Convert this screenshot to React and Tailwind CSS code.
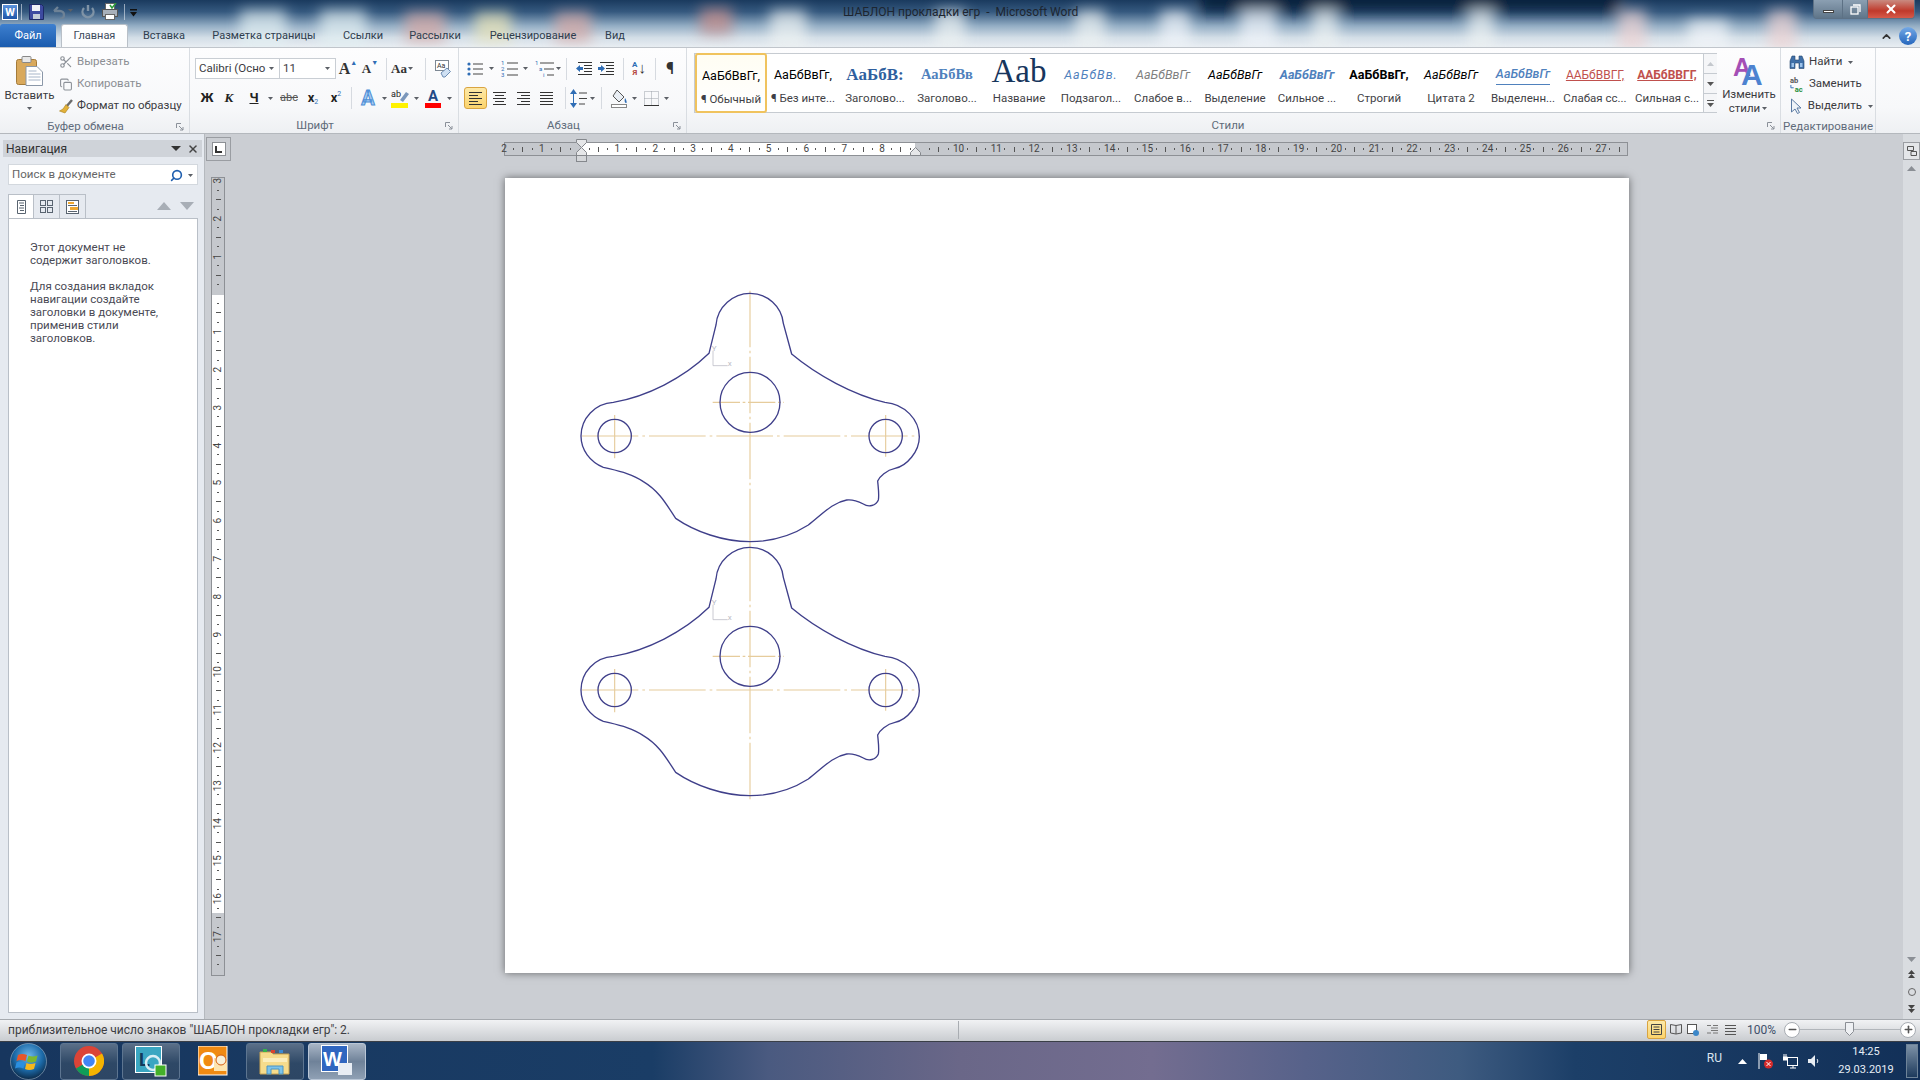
import { Scissors, Copy, X, Search, ChevronUp, Plus, Minus } from 'lucide-react';

const tabs = [
  ['Вставка', 'w-[72px]'],
  ['Разметка страницы', 'w-[128px]'],
  ['Ссылки', 'w-[70px]'],
  ['Рассылки', 'w-[74px]'],
  ['Рецензирование', 'w-[122px]'],
  ['Вид', 'w-[42px]'],
];

const galleryStyles = [
  { sample: 'АаБбВвГг,', label: '¶ Обычный', cls: 'text-[12.5px] text-black', active: true },
  { sample: 'АаБбВвГг,', label: '¶ Без инте...', cls: 'text-[12.5px] text-black' },
  { sample: 'АаБбВ:', label: 'Заголово...', cls: "text-[17px] font-bold text-[#2f5f9e] font-['Liberation_Serif']" },
  { sample: 'АаБбВв', label: 'Заголово...', cls: "text-[14.5px] font-bold text-[#4f81bd] font-['Liberation_Serif']" },
  { sample: 'Aab', label: 'Название', cls: "text-[33px] leading-[36px] -mt-[8px] text-[#17365d] font-['Liberation_Serif']" },
  { sample: 'АаБбВв.', label: 'Подзагол...', cls: 'text-[12.5px] italic tracking-[1px] text-[#4f81bd]' },
  { sample: 'АаБбВвГг', label: 'Слабое в...', cls: 'text-[12.5px] italic text-[#808080]' },
  { sample: 'АаБбВвГг', label: 'Выделение', cls: 'text-[12.5px] italic text-black' },
  { sample: 'АаБбВвГг', label: 'Сильное ...', cls: 'text-[12.5px] italic font-bold text-[#4f81bd]' },
  { sample: 'АаБбВвГг,', label: 'Строгий', cls: 'text-[12.5px] font-bold text-black' },
  { sample: 'АаБбВвГг', label: 'Цитата 2', cls: 'text-[12.5px] italic text-black' },
  { sample: 'АаБбВвГг', label: 'Выделенн...', cls: 'text-[12.5px] italic font-medium text-[#4f81bd] border-b border-[#4f81bd]' },
  { sample: 'ААБбВВГГ,', label: 'Слабая сс...', cls: 'text-[12px] text-[#c0504d] underline' },
  { sample: 'ААБбВВГГ,', label: 'Сильная с...', cls: 'text-[12px] font-bold text-[#c0504d] underline' },
];

const hNums = [2, 1, ''];
for (let i = 1; i <= 27; i++) hNums.push(i === 9 ? '' : i);
const vNums = [3, 2, 1, ''];
for (let i = 1; i <= 17; i++) vNums.push(i);

function Arrow({ w = 'w-[9px]' }) {
  return (
    <div className={`${w} flex items-center justify-center shrink-0`}>
      <svg width="5" height="3" viewBox="0 0 5 3"><path d="M0 0h5L2.5 3z" fill="#5b5f66" /></svg>
    </div>
  );
}

function Sep({ cls = '' }) {
  return <div className={`w-px h-[22px] bg-[#d6dae0] shrink-0 ${cls}`} />;
}

function Launcher() {
  return (
    <div className="w-[18px] flex items-center justify-center shrink-0">
      <svg width="8" height="8" viewBox="0 0 8 8" fill="none" stroke="#8a9099">
        <path d="M.5 5V.5H5M3 3l4 4M7 4v3H4" />
      </svg>
    </div>
  );
}

function GroupLabel({ text, launcher = true }) {
  return (
    <div className="h-[17px] pt-[2px] flex items-center shrink-0 mt-auto">
      <div className="flex-1 text-center text-[11.5px] leading-none text-[#5f6b7a]">{text}</div>
      {launcher && <Launcher />}
    </div>
  );
}

function Ic({ w, children, cls = '' }) {
  return <div className={`${w} h-[22px] flex items-center justify-center shrink-0 ${cls}`}>{children}</div>;
}

function LinesIcon({ kind }) {
  const rows = {
    left: ['M1 2.5h13', 'M1 5.5h9', 'M1 8.5h13', 'M1 11.5h9', 'M1 14.5h13'],
    center: ['M1 2.5h13', 'M3 5.5h9', 'M1 8.5h13', 'M3 11.5h9', 'M1 14.5h13'],
    right: ['M1 2.5h13', 'M5 5.5h9', 'M1 8.5h13', 'M5 11.5h9', 'M1 14.5h13'],
    justify: ['M1 2.5h13', 'M1 5.5h13', 'M1 8.5h13', 'M1 11.5h13', 'M1 14.5h13'],
  }[kind];
  return (
    <svg width="15" height="16" viewBox="0 0 15 16" stroke="#333" fill="none">
      {rows.map((d) => <path key={d} d={d} />)}
    </svg>
  );
}

function BulletsIcon() {
  return (
    <svg width="16" height="16" viewBox="0 0 16 16" fill="none">
      <circle cx="2" cy="3" r="1.6" fill="#2f6db5" /><circle cx="2" cy="8" r="1.6" fill="#2f6db5" /><circle cx="2" cy="13" r="1.6" fill="#2f6db5" />
      <path d="M6 3h10M6 8h10M6 13h10" stroke="#444" />
    </svg>
  );
}

function NumberingIcon() {
  return (
    <svg width="17" height="17" viewBox="0 0 17 17" fill="none">
      <text x="0" y="5" fontSize="6" fill="#2f6db5" fontFamily="Roboto">1</text>
      <text x="0" y="11" fontSize="6" fill="#2f6db5" fontFamily="Roboto">2</text>
      <text x="0" y="17" fontSize="6" fill="#2f6db5" fontFamily="Roboto">3</text>
      <path d="M6 3h11M6 9h11M6 15h11" stroke="#444" />
    </svg>
  );
}

function MultiIcon() {
  return (
    <svg width="19" height="17" viewBox="0 0 19 17" fill="none">
      <text x="0" y="5" fontSize="6" fill="#2f6db5" fontFamily="Roboto">1</text>
      <text x="4" y="11" fontSize="6" fill="#2f6db5" fontFamily="Roboto">a</text>
      <text x="8" y="17" fontSize="6" fill="#2f6db5" fontFamily="Roboto">i</text>
      <path d="M5 3h14M9 9h10M12 15h7" stroke="#444" />
    </svg>
  );
}

function IndentIcon({ dir }) {
  return (
    <svg width="16" height="15" viewBox="0 0 16 15" fill="none">
      <path d="M2 1.5h14M8 4.5h8M8 7.5h8M8 10.5h8M2 13.5h14" stroke="#333" />
      {dir === 'out'
        ? <path d="M0 7.5l4-3.5v2h3v3H4v2z" fill="#2f6db5" />
        : <path d="M7 7.5L3 4v2H0v3h3v2z" fill="#2f6db5" />}
    </svg>
  );
}

function PasteIcon() {
  return (
    <svg width="27" height="30" viewBox="0 0 27 30">
      <rect x="0.5" y="3.5" width="20" height="25" rx="2" fill="#d9a95c" stroke="#a47b3a" />
      <rect x="6" y="0.5" width="9" height="6" rx="1" fill="#e8e8e8" stroke="#888" />
      <path d="M10 10.5h11l5.5 5.5v13.5H10z" fill="#fff" stroke="#8a97a8" />
      <path d="M12.5 15h8M12.5 18h12M12.5 21h12M12.5 24h12" stroke="#a7b6c9" />
    </svg>
  );
}

function PainterIcon() {
  return (
    <svg width="14" height="15" viewBox="0 0 14 15">
      <path d="M13 1L7 8" stroke="#6b6b6b" strokeWidth="2.4" />
      <path d="M7 5.5l3 3-4 5.5-5.5-2 3.5-2z" fill="#e3b23a" stroke="#a87d1a" strokeWidth=".6" />
    </svg>
  );
}

function ClearFormatIcon() {
  return (
    <svg width="17" height="18" viewBox="0 0 17 18" fill="none">
      <rect x="1.5" y=".5" width="13" height="10" fill="#fff" stroke="#7d8894" />
      <text x="3" y="8" fontSize="7" fill="#333" fontFamily="Roboto">Aa</text>
      <path d="M7 13l6-5 3.5 3.5-5.5 5.5H9z" fill="#cfe0f3" stroke="#6d8db3" />
    </svg>
  );
}

function Highlighter() {
  return (
    <svg width="18" height="19" viewBox="0 0 18 19">
      <text x="0" y="8" fontSize="9" fill="#222" fontFamily="Roboto">ab</text>
      <path d="M9 11l6-8 3 2-6 8z" fill="#7b97bb" />
      <rect x="0" y="14" width="17" height="5" fill="#fff200" />
    </svg>
  );
}

function Shading() {
  return (
    <svg width="17" height="19" viewBox="0 0 17 19" fill="none">
      <path d="M6 1l7 7-5 5-6-6z" fill="#e9eef4" stroke="#555" />
      <path d="M14 9c2 3 2 5 1 5s-2-2-1-5z" fill="#2f6db5" />
      <rect x=".5" y="15.5" width="15" height="3" fill="#fff" stroke="#888" />
    </svg>
  );
}

function Borders() {
  return (
    <svg width="15" height="15" viewBox="0 0 15 15" fill="none">
      <path d="M.5.5h14v14H.5zM7.5.5v14M.5 7.5h14" stroke="#9aa0a8" strokeDasharray="1 1" />
      <path d="M0 14.5h15" stroke="#333" />
    </svg>
  );
}

function LineSpacing() {
  return (
    <svg width="17" height="19" viewBox="0 0 17 19" fill="none">
      <path d="M3.5 0L7 5H0zM3.5 19L0 14h7z" fill="#2f6db5" />
      <path d="M3.5 4v11" stroke="#2f6db5" />
      <path d="M9 4h8M9 9.5h8M9 15h6" stroke="#444" />
    </svg>
  );
}

function ChangeStylesIcon() {
  return (
    <svg width="32" height="33" viewBox="0 0 32 33">
      <text x="0" y="23" fontSize="25" fontWeight="700" fill="#a44fb5" fontFamily="Liberation Sans">A</text>
      <text x="8" y="32" fontSize="30" fontWeight="700" fill="#4d82d0" fontFamily="Liberation Sans">A</text>
    </svg>
  );
}

function Binoculars() {
  return (
    <svg width="16" height="15" viewBox="0 0 16 15">
      <path d="M1 6l2-5h3v4h4V1h3l2 5v7.5H10V8H6v5.5H1z" fill="#3f6fa8" stroke="#25476f" strokeWidth=".6" />
      <rect x="2.5" y="8" width="2.5" height="4" fill="#9cc2ea" /><rect x="11" y="8" width="2.5" height="4" fill="#9cc2ea" />
    </svg>
  );
}

function ReplaceIcon() {
  return (
    <svg width="17" height="17" viewBox="0 0 17 17">
      <text x="1" y="7" fontSize="8" fontWeight="700" fill="#555" fontFamily="Roboto">ab</text>
      <path d="M2 9v3h3" stroke="#2f6db5" fill="none" />
      <text x="6" y="16" fontSize="8" fontWeight="700" fill="#1f8f3a" fontFamily="Roboto">ac</text>
    </svg>
  );
}

function CursorIcon() {
  return (
    <svg width="13" height="16" viewBox="0 0 13 16">
      <path d="M1.5 1l9.5 9H7l2.5 4.5-2 1L5 11l-3.5 3z" fill="#eef3f8" stroke="#5a7aa3" />
    </svg>
  );
}

function HRuler() {
  return (
    <div className="relative w-[1124px] h-[14px] mt-[8px] border border-[#8d9095] bg-[linear-gradient(90deg,#c5c8cd_76px,#ffffff_76px,#ffffff_410px,#c5c8cd_410px)] flex items-center">
      <div className="flex -ml-[5.7px]">
        {hNums.map((n, i) => (
          <div key={i} className="w-[37.8px] shrink-0 flex items-center h-[12px]">
            <div className="w-[9.45px] text-center text-[10px] leading-none text-[#444] shrink-0">{n}</div>
            <div className="w-[9.45px] flex justify-center shrink-0"><div className="w-px h-[2px] bg-[#555]" /></div>
            <div className="w-[9.45px] flex justify-center shrink-0"><div className="w-px h-[5px] bg-[#555]" /></div>
            {i < 29 && <div className="w-[9.45px] flex justify-center shrink-0"><div className="w-px h-[2px] bg-[#555]" /></div>}
          </div>
        ))}
      </div>
      <svg className="absolute left-[70px] -top-[4px]" width="13" height="23" viewBox="0 0 13 23">
        <path d="M1.500.5h10v3l-5 5-5-5z" fill="#e6e7e9" stroke="#85888d" />
        <path d="M6.500 8.500l5 5v3h-10v-3z" fill="#e6e7e9" stroke="#85888d" />
        <rect x="1.500" y="16.500" width="10" height="6" fill="#d5d7da" stroke="#85888d" />
      </svg>
      <svg className="absolute left-[404px] top-[4px]" width="13" height="10" viewBox="0 0 13 10">
        <path d="M6.500.5l5 5v3h-10v-3z" fill="#e6e7e9" stroke="#85888d" />
      </svg>
    </div>
  );
}

function VRuler() {
  return (
    <div className="w-[14px] h-[799px] mt-[16px] ml-[6px] border border-[#8d9095] bg-[linear-gradient(180deg,#c5c8cd_117px,#ffffff_117px,#ffffff_735px,#c5c8cd_735px)] overflow-hidden flex flex-col">
      {vNums.map((n, i) => (
        <div key={i} className={`h-[37.8px] shrink-0 flex flex-col items-center w-[12px] ${i === 0 ? '-mt-[2px]' : ''}`}>
          <div className="h-[9.45px] flex items-center justify-center text-[10px] leading-none text-[#444] -rotate-90 shrink-0">{n}</div>
          <div className="h-[9.45px] flex items-center shrink-0"><div className="h-px w-[2px] bg-[#555]" /></div>
          <div className="h-[9.45px] flex items-center shrink-0"><div className="h-px w-[5px] bg-[#555]" /></div>
          <div className="h-[9.45px] flex items-center shrink-0"><div className="h-px w-[2px] bg-[#555]" /></div>
        </div>
      ))}
    </div>
  );
}

function Gasket({ cls = '' }) {
  const outline = 'M447 220 L468 135 C472 80 520 40 570 40 C622 40 665 80 670 130 L695 222 C770 285 880 345 975 367 C1035 372 1078 420 1078 470 C1078 515 1040 558 1005 565 C980 570 958 590 953 603 C955 625 958 645 955 660 C948 678 925 682 910 672 C890 662 875 658 860 660 C815 668 785 705 745 735 C690 770 630 785 570 785 C490 785 405 755 347 715 C320 675 300 635 250 605 C215 580 170 572 130 562 C90 545 63 510 63 468 C63 415 105 370 160 367 C260 350 370 295 447 220 Z';
  return (
    <svg className={`block overflow-visible ${cls}`} width="380" height="270" viewBox="0 0 1140 810" fill="none">
      <g stroke="#e6cc9c" strokeWidth="3.4">
        <path d="M570 32V800" strokeDasharray="170 10 8 10" />
        <path d="M65 468H1078" strokeDasharray="170 12 8 12" />
        <path d="M458 367H672" strokeDasharray="82 8 8 8" />
        <path d="M164 405V535M977 405V530" />
      </g>
      <path d="M459 212V257H503" stroke="#bcbcc6" strokeWidth="2.400" />
      <text x="455" y="212" fontSize="24" fill="#bcbcc6" fontFamily="Roboto">Y</text>
      <text x="503" y="257" fontSize="24" fill="#bcbcc6" fontFamily="Roboto">x</text>
      <g stroke="#3f3f8a" strokeWidth="4">
        <path d={outline} />
        <circle cx="570" cy="367" r="90" />
        <circle cx="164" cy="468" r="50" />
        <circle cx="977" cy="468" r="50" />
      </g>
    </svg>
  );
}

function TaskButton({ children, plain = false, active = false }) {
  const skin = plain
    ? ''
    : active
      ? 'border border-[#b9c6d6] bg-[linear-gradient(180deg,#a9b6c6,#6f8299_50%,#8fa0b4)]'
      : 'border border-[#5d7590] bg-[linear-gradient(180deg,#5a6f88,#2e4866_55%,#2d4664)]';
  return <div className={`w-[58px] h-[37px] rounded-[3px] flex items-center justify-center ${skin}`}>{children}</div>;
}

export default function App() {
  return (
    <div className="w-[1920px] h-[1080px] flex flex-col overflow-hidden font-[Roboto,sans-serif] text-[#3b3b3f] select-none">
      {/* заголовок окна и вкладки */}
      <div className="relative h-[47px] shrink-0 bg-[linear-gradient(180deg,#1a3a5e_0%,#35597f_25%,#93adc4_55%,#d3dee7_80%,#e8edf2_100%)] overflow-hidden">
        <svg className="absolute inset-0" width="1920" height="47">
          <defs><filter id="bl"><feGaussianBlur stdDeviation="7" /></filter></defs>
          <g filter="url(#bl)" opacity="0.7">
            <rect x="1200" y="-12" width="420" height="24" fill="#04152e" />
            <rect x="240" y="10" width="46" height="40" fill="#e3f0f3" />
            <rect x="320" y="10" width="46" height="40" fill="#e3f0f3" />
            <rect x="405" y="12" width="40" height="30" fill="#d8a9a4" />
            <rect x="475" y="12" width="36" height="30" fill="#ece6b8" />
            <rect x="555" y="12" width="36" height="30" fill="#d8a9a4" />
            <rect x="700" y="8" width="32" height="26" fill="#cc8f8a" />
            <rect x="770" y="10" width="36" height="40" fill="#eef3f3" />
            <rect x="935" y="10" width="30" height="40" fill="#eef3f3" />
            <rect x="1075" y="10" width="30" height="40" fill="#eef3f3" />
            <rect x="1160" y="10" width="30" height="40" fill="#f1f5fa" />
            <rect x="1240" y="10" width="36" height="40" fill="#f1f5fa" />
            <rect x="1312" y="10" width="26" height="40" fill="#eef3f3" />
            <rect x="1468" y="10" width="26" height="40" fill="#eef3f3" />
            <rect x="1618" y="10" width="28" height="40" fill="#efd3d3" />
            <rect x="1688" y="20" width="40" height="30" fill="#f4f7fa" />
            <rect x="1768" y="10" width="28" height="40" fill="#efd3d3" />
          </g>
        </svg>

        <div className="relative h-[24px] flex items-start">
          <div className="w-[16px] h-[16px] mt-[4px] ml-[2px] bg-[linear-gradient(180deg,#5b93dc,#1f56a8)] border border-white flex items-center justify-center text-[11px] font-bold leading-none text-white shrink-0">W</div>
          <div className="w-px h-[16px] mt-[4px] ml-[3px] bg-[#dfe6ee]/60" />
          <svg className="mt-[4px] ml-[7px]" width="15" height="16" viewBox="0 0 15 16">
            <path d="M.5.5h12l2 2v13H.5z" fill="#3d4aa0" stroke="#1d2a66" />
            <rect x="3" y="1" width="8" height="6" fill="#eef1f6" /><rect x="4" y="10" width="7" height="5" fill="#c4ccd8" />
          </svg>
          <svg className="mt-[5px] ml-[7px]" width="14" height="14" viewBox="0 0 14 14" fill="none">
            <path d="M3 6l4-4M3 6h6a4 4 0 0 1 0 8" stroke="#6e8296" strokeWidth="2.4" />
          </svg>
          <Arrow w="w-[6px] h-[24px] -mt-[2px] ml-[2px]" />
          <svg className="mt-[5px] ml-[8px]" width="14" height="14" viewBox="0 0 14 14" fill="none">
            <path d="M3 3a5.500 5.500 0 1 0 8 0M7 0v6" stroke="#7f93a6" strokeWidth="2.4" />
          </svg>
          <svg className="mt-[3px] ml-[7px]" width="16" height="17" viewBox="0 0 16 17">
            <rect x="3.500" y=".5" width="9" height="6" fill="#fff" stroke="#666" />
            <rect x=".5" y="6.500" width="15" height="7" fill="#a8b0ba" stroke="#555" />
            <rect x="3.500" y="11.500" width="9" height="5" fill="#fff" stroke="#666" />
            <path d="M8 2l2 3 4-5" stroke="#2e9d3a" strokeWidth="1.600" fill="none" />
          </svg>
          <div className="w-px h-[16px] mt-[4px] ml-[6px] bg-[#dfe6ee]/60" />
          <svg className="mt-[9px] ml-[5px]" width="7" height="8" viewBox="0 0 7 8"><path d="M0 0h7v1.500H0zM0 3h7L3.500 7.500z" fill="#111" /></svg>
          <div className="ml-[706px] mt-[4px] text-[12px] leading-[16px] text-[#1d2530] whitespace-pre">ШАБЛОН прокладки егр  -  Microsoft Word</div>
          <div className="ml-auto mr-[5px] flex h-[19px] w-[102px] rounded-b-[4px] border border-t-0 border-[#5d7185] overflow-hidden">
            <div className="w-[28px] bg-[linear-gradient(180deg,#8b9fb2,#5f7589)] flex items-center justify-center"><div className="w-[11px] h-[3px] mt-[4px] bg-white border border-[#444]" /></div>
            <div className="w-[26px] border-x border-[#5d7185] bg-[linear-gradient(180deg,#8b9fb2,#5f7589)] flex items-center justify-center">
              <svg width="11" height="11" viewBox="0 0 11 11" fill="none" stroke="#fff" strokeWidth="1.300"><rect x="1" y="3" width="7" height="7" /><path d="M3 1h7v7" /></svg>
            </div>
            <div className="flex-1 bg-[linear-gradient(180deg,#c98a80,#c0392b_60%,#d65a4a)] flex items-center justify-center">
              <X size={14} strokeWidth={3.5} color="#ffffff" />
            </div>
          </div>
        </div>

        <div className="relative h-[23px] flex items-end">
          <div className="w-[56px] h-[23px] pt-[1px] rounded-t-[3px] bg-[linear-gradient(180deg,#3d7fcf,#1b5cae)] text-white text-[11px] flex items-center justify-center">Файл</div>
          <div className="w-[67px] h-[23px] pt-[1px] ml-[5px] rounded-t-[3px] border border-b-0 border-[#b9c0c8] bg-[linear-gradient(180deg,#ffffff,#fbfcfd)] text-[11px] text-[#3b4a5c] flex items-center justify-center">Главная</div>
          {tabs.map(([t, w]) => (
            <div key={t} className={`${w} h-[23px] pt-[1px] shrink-0 flex items-center justify-center text-[11px] text-[#2f3d4e]`}>{t}</div>
          ))}
          <div className="ml-auto mr-[3px] mb-[2px] flex items-center gap-[6px]">
            <ChevronUp size={13} strokeWidth={3} color="#333333" />
            <div className="w-[18px] h-[18px] rounded-full bg-[linear-gradient(180deg,#74a9e6,#2566bd)] text-white text-[13px] font-bold leading-none flex items-center justify-center">?</div>
          </div>
        </div>
      </div>

      {/* лента */}
      <div className="h-[87px] shrink-0 flex border-t border-b border-[#b4b8bd] border-t-[#c0c5cb] bg-[linear-gradient(180deg,#fdfdfe,#f7f8fa_70%,#eef0f3)] text-[11.5px]">
        {/* Буфер обмена */}
        <div className="w-[190px] shrink-0 flex flex-col border-r border-[#d9dde2]">
          <div className="flex pt-[3px]">
            <div className="w-[59px] flex flex-col items-center shrink-0">
              <div className="h-[35px] flex items-end"><PasteIcon /></div>
              <div className="text-[11.5px] leading-none mt-[4px]">Вставить</div>
              <Arrow w="w-[9px] h-[12px] mt-[1px]" />
            </div>
            <div className="flex flex-col">
              <div className="h-[22px] flex items-center text-[#8c8f94]"><Scissors size={14} color="#8c9198" className="w-[14px] shrink-0" /><span className="ml-[4px]">Вырезать</span></div>
              <div className="h-[22px] flex items-center text-[#8c8f94]"><Copy size={13} color="#8c9198" className="w-[14px] shrink-0" /><span className="ml-[4px]">Копировать</span></div>
              <div className="h-[22px] flex items-center"><PainterIcon /><span className="ml-[4px]">Формат по образцу</span></div>
            </div>
          </div>
          <GroupLabel text="Буфер обмена" />
        </div>

        {/* Шрифт */}
        <div className="w-[269px] shrink-0 flex flex-col border-r border-[#d9dde2] pt-[10px]">
          <div className="flex items-center pl-[5px] h-[21px]">
            <div className="w-[85px] h-[21px] border border-[#c9ced4] bg-white flex items-center pl-[3px] text-[11.5px] shrink-0">Calibri (Осно<Arrow w="w-[9px] ml-auto mr-[3px]" /></div>
            <div className="w-[56px] h-[21px] border border-l-0 border-[#c9ced4] bg-white flex items-center pl-[3px] text-[11.5px] shrink-0">11<Arrow w="w-[9px] ml-auto mr-[3px]" /></div>
            <Ic w="w-[22px] ml-[1px]"><span className="text-[16px] font-['Liberation_Serif'] font-bold text-[#333]">A</span><span className="text-[7px] text-[#2f6db5] -mt-[10px]">▲</span></Ic>
            <Ic w="w-[22px]"><span className="text-[13px] font-['Liberation_Serif'] font-bold text-[#333]">A</span><span className="text-[7px] text-[#2f6db5] -mt-[10px]">▼</span></Ic>
            <Sep cls="ml-[5px]" />
            <Ic w="w-[32px]"><span className="text-[13px] font-['Liberation_Serif'] font-bold text-[#333]">Aa</span><Arrow w="w-[8px]" /></Ic>
            <Sep cls="ml-[6px]" />
            <Ic w="w-[30px] ml-[1px]"><ClearFormatIcon /></Ic>
          </div>
          <div className="flex items-center pl-[5px] h-[22px] mt-[8px]">
            <Ic w="w-[24px]"><span className="text-[13px] font-bold text-[#222]">Ж</span></Ic>
            <Ic w="w-[20px]"><span className="text-[13px] font-bold italic text-[#222] font-['Liberation_Serif']">К</span></Ic>
            <Ic w="w-[24px] ml-[3px]"><span className="text-[13px] font-bold underline text-[#222]">Ч</span></Ic>
            <Arrow />
            <Ic w="w-[24px] ml-[2px]"><span className="text-[11px] line-through text-[#555]">abc</span></Ic>
            <Ic w="w-[24px]"><span className="text-[13px] font-bold text-[#222]">x</span><span className="text-[7px] text-[#2f6db5] mt-[8px]">2</span></Ic>
            <Ic w="w-[22px]"><span className="text-[13px] font-bold text-[#222]">x</span><span className="text-[7px] text-[#2f6db5] -mt-[8px]">2</span></Ic>
            <Sep cls="ml-[4px]" />
            <Ic w="w-[24px] ml-[4px]"><span className="text-[20px] font-bold leading-none text-[#a9cdf2] [-webkit-text-stroke:1px_#4f8fd6]">A</span></Ic>
            <Arrow w="w-[8px]" />
            <Ic w="w-[24px]"><Highlighter /></Ic>
            <Arrow />
            <Ic w="w-[24px]">
              <div className="flex flex-col items-center">
                <span className="text-[15px] font-bold leading-[14px] text-[#234a86]">A</span>
                <div className="w-[16px] h-[5px] bg-[#ff0000]" />
              </div>
            </Ic>
            <Arrow />
          </div>
          <GroupLabel text="Шрифт" />
        </div>

        {/* Абзац */}
        <div className="w-[228px] shrink-0 flex flex-col border-r border-[#d9dde2] pt-[10px]">
          <div className="flex items-center pl-[4px] h-[21px]">
            <Ic w="w-[24px]"><BulletsIcon /></Ic>
            <Arrow w="w-[8px]" />
            <Ic w="w-[24px] ml-[2px]"><NumberingIcon /></Ic>
            <Arrow w="w-[8px]" />
            <Ic w="w-[20px] ml-[5px]"><MultiIcon /></Ic>
            <Arrow w="w-[8px]" />
            <Sep cls="ml-[4px]" />
            <Ic w="w-[22px] ml-[6px]"><IndentIcon dir="out" /></Ic>
            <Ic w="w-[22px]"><IndentIcon dir="in" /></Ic>
            <Sep cls="ml-[6px]" />
            <Ic w="w-[22px] ml-[4px]">
              <div className="flex flex-col items-center text-[8px] font-bold leading-[8px]"><span className="text-[#2f6db5]">А</span><span className="text-[#b5473f]">Я</span></div>
              <span className="text-[15px] leading-none text-[#333] ml-[1px]">↓</span>
            </Ic>
            <Sep cls="ml-[5px]" />
            <Ic w="w-[24px] ml-[2px]"><span className="text-[16px] font-bold text-[#333]">¶</span></Ic>
          </div>
          <div className="flex items-center pl-[5px] h-[22px] mt-[8px]">
            <Ic w="w-[23px]" cls="rounded-[3px] border border-[#d9a441] bg-[linear-gradient(180deg,#fde9a8,#fbd36c)]"><LinesIcon kind="left" /></Ic>
            <Ic w="w-[24px]"><LinesIcon kind="center" /></Ic>
            <Ic w="w-[24px]"><LinesIcon kind="right" /></Ic>
            <Ic w="w-[23px]"><LinesIcon kind="justify" /></Ic>
            <Sep cls="ml-[7px]" />
            <Ic w="w-[20px] ml-[2px]"><LineSpacing /></Ic>
            <Arrow w="w-[8px]" />
            <Sep cls="ml-[5px]" />
            <Ic w="w-[22px] ml-[6px]"><Shading /></Ic>
            <Arrow w="w-[8px]" />
            <Ic w="w-[22px] ml-[2px]"><Borders /></Ic>
            <Arrow w="w-[8px]" />
          </div>
          <GroupLabel text="Абзац" />
        </div>

        {/* Стили */}
        <div className="w-[1094px] shrink-0 flex flex-col border-r border-[#d9dde2] pl-[7px]">
          <div className="flex pt-[5px]">
            <div className="w-[1023px] h-[60px] shrink-0 flex border border-[#c6cbd1] bg-white">
              {galleryStyles.map((s, i) => (
                <div key={i} className={`w-[72px] shrink-0 flex flex-col items-center overflow-hidden ${s.active ? 'rounded-[3px] border-2 border-[#f0c35e] bg-[linear-gradient(180deg,#fffdf3,#fff)] -my-px' : ''}`}>
                  <div className="h-[37px] pt-[5px] w-[62px] flex items-center justify-center overflow-hidden whitespace-nowrap">
                    <span className={s.cls}>{s.sample}</span>
                  </div>
                  <div className="text-[11.5px] leading-[14px] whitespace-nowrap text-[#3f3f46]">{s.label}</div>
                </div>
              ))}
              <div className="ml-auto w-[14px] flex flex-col border-l border-[#c6cbd1] shrink-0 bg-[#f5f6f8]">
                <div className="h-[20px] flex items-center justify-center border-b border-[#c6cbd1]"><svg width="7" height="4" viewBox="0 0 7 4"><path d="M3.500 0L7 4H0z" fill="#c4c8cd" /></svg></div>
                <div className="h-[20px] flex items-center justify-center border-b border-[#c6cbd1]"><svg width="7" height="4" viewBox="0 0 7 4"><path d="M0 0h7L3.500 4z" fill="#555" /></svg></div>
                <div className="flex-1 flex items-center justify-center"><svg width="7" height="7" viewBox="0 0 7 7"><path d="M0 0h7v1H0zM0 3h7L3.500 7z" fill="#555" /></svg></div>
              </div>
            </div>
            <div className="w-[63px] flex flex-col items-center shrink-0 pl-[1px]">
              <div className="h-[34px] flex items-start"><ChangeStylesIcon /></div>
              <div className="text-[11.5px] leading-[14px]">Изменить</div>
              <div className="text-[11.5px] leading-[14px] flex items-center">стили<Arrow w="w-[9px]" /></div>
            </div>
          </div>
          <GroupLabel text="Стили" />
        </div>

        {/* Редактирование */}
        <div className="w-[95px] shrink-0 flex flex-col border-r border-[#d9dde2]">
          <div className="flex flex-col pt-[3px] pl-[8px] text-[11.5px]">
            <div className="h-[22px] flex items-center gap-[4px]"><div className="w-[16px] flex justify-center"><Binoculars /></div>Найти<Arrow w="w-[9px]" /></div>
            <div className="h-[22px] flex items-center gap-[4px]"><div className="w-[16px] flex justify-center"><ReplaceIcon /></div>Заменить</div>
            <div className="h-[22px] flex items-center gap-[4px]"><div className="w-[16px] flex justify-center"><CursorIcon /></div>Выделить<Arrow w="w-[9px]" /></div>
          </div>
          <GroupLabel text="Редактирование" launcher={false} />
        </div>
      </div>

      {/* рабочая область */}
      <div className="flex-1 min-h-0 flex bg-[#cbced3]">
        {/* Навигация */}
        <div className="w-[205px] shrink-0 bg-[#e6eaf0] flex flex-col pt-[6px] border-r border-[#b5b9be]">
          <div className="h-[17px] ml-[3px] w-[199px] bg-[#cfd3d9] flex items-center pl-[3px] text-[12px] text-[#333] shrink-0">
            Навигация
            <svg className="ml-auto" width="10" height="5" viewBox="0 0 10 5"><path d="M0 0h10L5 5z" fill="#333" /></svg>
            <X size={12} strokeWidth={3} color="#444444" className="ml-[6px] mr-[3px]" />
          </div>
          <div className="mt-[7px] ml-[8px] w-[190px] h-[21px] bg-white border border-[#d3d8de] flex items-center pl-[3px] text-[11.5px] text-[#666] shrink-0">
            Поиск в документе
            <Search size={13} strokeWidth={3} color="#1f5faf" className="ml-auto -scale-x-100 mt-[1px]" />
            <Arrow w="w-[14px] mt-[1px]" />
          </div>
          <div className="mt-[9px] ml-[8px] w-[190px] h-[25px] flex items-end shrink-0">
            <div className="w-[26px] h-[25px] bg-white border border-b-0 border-[#b9bfc7] flex items-center justify-center">
              <svg width="9" height="14" viewBox="0 0 9 14" fill="none" stroke="#596470"><path d="M.5.500h8v13h-8zM2 3h5M3 5.500h4M2 8h5M3 10.500h4" /></svg>
            </div>
            <div className="w-[26px] h-[25px] border border-l-0 border-[#b9bfc7] flex items-center justify-center">
              <svg width="13" height="13" viewBox="0 0 13 13" fill="none" stroke="#596470"><rect x=".5" y=".5" width="5" height="5" /><rect x="7.500" y=".5" width="5" height="5" /><rect x=".5" y="7.500" width="5" height="5" /><rect x="7.500" y="7.500" width="5" height="5" /></svg>
            </div>
            <div className="w-[26px] h-[25px] border border-l-0 border-[#b9bfc7] flex items-center justify-center">
              <svg width="13" height="14" viewBox="0 0 13 14"><rect x=".5" y=".5" width="12" height="13" fill="#fff" stroke="#596470" /><rect x="2" y="2" width="6" height="2" fill="#f0a830" /><rect x="4" y="7" width="8" height="3" fill="#f0a830" /><path d="M2 5.500h9M2 11.500h9" stroke="#596470" /></svg>
            </div>
            <svg className="ml-[71px] mb-[9px]" width="14" height="8" viewBox="0 0 14 8"><path d="M7 0l7 8H0z" fill="#a8aeb6" /></svg>
            <svg className="ml-[9px] mb-[9px]" width="14" height="8" viewBox="0 0 14 8"><path d="M0 0h14L7 8z" fill="#a8aeb6" /></svg>
          </div>
          <div className="ml-[8px] w-[190px] h-[795px] border border-[#b9bfc7] bg-white pt-[22px] pl-[21px] text-[11.5px] leading-[13px] text-[#4a4a55] shrink-0 -mt-px">
            <p>Этот документ не<br />содержит заголовков.</p>
            <p className="mt-[13px]">Для создания вкладок<br />навигации создайте<br />заголовки в документе,<br />применив стили<br />заголовков.</p>
          </div>
        </div>

        {/* линейка слева */}
        <div className="w-[26px] shrink-0 flex flex-col pt-[3px]">
          <div className="w-[25px] h-[24px] border border-[#9a9da2] flex items-center justify-center ml-[1px] shrink-0">
            <div className="w-[14px] h-[14px] bg-white border border-[#8d9095] flex items-center justify-center">
              <svg width="7" height="7" viewBox="0 0 7 7"><path d="M0 0h2v5h5v2H0z" fill="#333" /></svg>
            </div>
          </div>
          <VRuler />
        </div>

        {/* документ */}
        <div className="flex-1 min-w-0 flex flex-col">
          <div className="ml-[273px]"><HRuler /></div>
          <div className="ml-[274px] mt-[22px] w-[1124px] h-[795px] bg-white shadow-[0_0_8px_rgba(0,0,0,0.5)] pl-[55px] pt-[102px] shrink-0">
            <Gasket />
            <Gasket cls="-mt-[16px]" />
          </div>
        </div>

        {/* прокрутка */}
        <div className="w-[17px] shrink-0 flex flex-col items-center pt-[8px] bg-[#d9dce0]">
          <div className="w-[17px] h-[18px] border border-[#9a9da2] bg-[#e4e6e9] flex items-center justify-center">
            <svg width="12" height="12" viewBox="0 0 12 12" fill="none" stroke="#555"><path d="M1.500 1.500h6v4h-6zM5 6.500h5.500v4H5z" /></svg>
          </div>
          <svg className="mt-[6px]" width="9" height="5" viewBox="0 0 9 5"><path d="M4.500 0L9 5H0z" fill="#8b8f95" /></svg>
          <svg className="mt-[786px]" width="9" height="5" viewBox="0 0 9 5"><path d="M0 0h9L4.500 5z" fill="#8b8f95" /></svg>
          <svg className="mt-[8px]" width="7" height="8" viewBox="0 0 7 8" fill="#444"><path d="M3.500 0L7 4H0zM3.500 4L7 8H0z" /></svg>
          <svg className="mt-[10px]" width="8" height="8" viewBox="0 0 8 8" fill="none" stroke="#666"><circle cx="4" cy="4" r="3.500" /></svg>
          <svg className="mt-[9px]" width="7" height="8" viewBox="0 0 7 8" fill="#444"><path d="M0 0h7L3.500 4zM0 4h7L3.500 8z" /></svg>
        </div>
      </div>

      {/* строка состояния */}
      <div className="h-[22px] shrink-0 flex items-center border-t border-[#a5a9ae] bg-[linear-gradient(180deg,#f1f2f4,#c9ccd0)] pl-[8px] pb-[2px] text-[12px] text-[#3d3d42]">
        <span className="w-[950px] shrink-0">приблизительное число знаков "ШАБЛОН прокладки егр": 2.</span>
        <div className="w-px h-[18px] bg-[#a9adb2] shrink-0" />
        <div className="w-[19px] h-[19px] ml-[688px] shrink-0 rounded-[2px] border border-[#d9a441] bg-[linear-gradient(180deg,#fde9a8,#fbd36c)] flex items-center justify-center">
          <svg width="11" height="11" viewBox="0 0 11 11" fill="none" stroke="#444"><path d="M.5.500h10v10H.5zM2.500 3h6M2.500 5.500h6M2.500 8h6" /></svg>
        </div>
        <svg className="ml-[4px] shrink-0" width="12" height="11" viewBox="0 0 12 11" fill="none" stroke="#555"><path d="M6 1.500L.5.500v8.500L6 10l5.500-1V.5zM6 1.500V10" /></svg>
        <svg className="ml-[5px] shrink-0" width="12" height="12" viewBox="0 0 12 12"><rect x=".5" y=".5" width="9" height="9" fill="#fff" stroke="#555" /><circle cx="9" cy="9" r="3" fill="#3b87c9" /></svg>
        <svg className="ml-[8px] shrink-0" width="11" height="10" viewBox="0 0 11 10" fill="none" stroke="#777"><path d="M0 .5h4M4 3h7M4 5.500h7M0 8h4M6 8h5M6 .5h5" /></svg>
        <svg className="ml-[7px] shrink-0" width="11" height="10" viewBox="0 0 11 10" fill="none" stroke="#555"><path d="M0 .5h11M0 3.500h11M0 6.500h11M0 9.500h11" /></svg>
        <span className="ml-[11px] text-[12px] text-[#40506a] shrink-0">100%</span>
        <div className="w-[16px] h-[16px] ml-[8px] rounded-full border border-[#a8adb3] bg-white flex items-center justify-center shrink-0"><Minus size={11} strokeWidth={3.5} color="#555555" /></div>
        <div className="relative w-[100px] h-px bg-[#b1b5ba] shrink-0">
          <svg className="absolute left-[45px] -top-[7px]" width="9" height="14" viewBox="0 0 9 14"><path d="M.5.500h8v9l-4 4-4-4z" fill="#eef0f3" stroke="#8a8e94" /></svg>
        </div>
        <div className="w-[16px] h-[16px] rounded-full border border-[#a8adb3] bg-white flex items-center justify-center shrink-0"><Plus size={11} strokeWidth={3.5} color="#555555" /></div>
      </div>

      {/* панель задач */}
      <div className="h-[39px] shrink-0 flex items-center bg-[linear-gradient(90deg,#17365e_0%,#1a3d66_34%,#4a5a80_40%,#6a6788_50%,#736d90_60%,#57628a_68%,#3e5b80_76%,#1c3f68_82%,#123058_100%)] border-t border-[#3a3f47] text-white">
        <div className="w-[54px] shrink-0 flex justify-center ml-[1px]">
          <svg width="37" height="37" viewBox="0 0 37 37">
            <defs><radialGradient id="orb" cx="50%" cy="35%" r="65%"><stop offset="0" stopColor="#6fb8ea" /><stop offset="0.6" stopColor="#1c6aa8" /><stop offset="1" stopColor="#0c2a48" /></radialGradient></defs>
            <circle cx="18.500" cy="18.500" r="18" fill="url(#orb)" stroke="#b7cbdb" strokeOpacity=".5" />
            <path d="M8 12q4-2 9 0l-1.500 6q-5-2-9 0z" fill="#e8562a" />
            <path d="M18.500 12.500q4 2 9 0l-1.500 6q-5 2-9 0z" fill="#7cb82f" />
            <path d="M6.500 19.500q4-2 8.500 0l-1.500 6q-4.500-2-8.500 0z" fill="#2b8fe0" />
            <path d="M16.500 20q4 2 9 0l-1.500 6q-5 2-9 0z" fill="#f8b81c" />
          </svg>
        </div>
        <div className="flex gap-[4px] ml-[5px] items-center">
          <TaskButton>
            <svg width="30" height="30" viewBox="0 0 30 30">
              <circle cx="15" cy="15" r="15" fill="#db4437" />
              <path d="M15 15L2 22.500A15 15 0 0 0 15 30z" fill="#0f9d58" />
              <path d="M15 15l13-7.500A15 15 0 0 1 15 30z" fill="#f4b400" />
              <circle cx="15" cy="15" r="7.500" fill="#fff" /><circle cx="15" cy="15" r="5.800" fill="#4285f4" />
            </svg>
          </TaskButton>
          <TaskButton>
            <svg width="32" height="31" viewBox="0 0 32 31">
              <rect x=".5" y=".5" width="26" height="26" fill="#3aa6c2" stroke="#fff" />
              <text x="4" y="20" fontSize="18" fontWeight="700" fill="#12395c" fontFamily="Liberation Sans">L</text>
              <circle cx="18" cy="17" r="7" fill="none" stroke="#d8eef5" strokeWidth="2.500" />
              <rect x="20" y="19" width="11" height="11" fill="#43b02a" stroke="#fff" />
            </svg>
          </TaskButton>
          <TaskButton plain>
            <svg width="30" height="30" viewBox="0 0 30 30">
              <rect width="29" height="29" fill="#f08a12" stroke="#fff" />
              <text x="1" y="23" fontSize="24" fontWeight="700" fill="#fff" fontFamily="Liberation Sans">O</text>
              <rect x="16" y="12" width="13" height="13" fill="#fde4ae" /><circle cx="23" cy="14" r="5" fill="#f7f0d8" stroke="#d35d14" />
            </svg>
          </TaskButton>
          <TaskButton>
            <svg width="32" height="28" viewBox="0 0 32 28">
              <path d="M1 5h11l2 2h16v20H1z" fill="#f6dc8c" stroke="#c7a352" />
              <rect x="4" y="2" width="4" height="3" fill="#37b24d" /><rect x="12" y="3" width="4" height="3" fill="#d9442f" /><rect x="20" y="3" width="4" height="3" fill="#3a8ad3" />
              <path d="M4 11h24v4H4z" fill="#fbeebd" />
              <path d="M8 27v-8h16v8h-4v-5h-8v5z" fill="#7cc3ea" stroke="#4b94c2" />
            </svg>
          </TaskButton>
          <TaskButton active>
            <svg width="32" height="32" viewBox="0 0 32 32">
              <rect x=".5" y=".5" width="26" height="26" fill="#2f66c0" stroke="#fff" />
              <path d="M17 18h14v12H17z" fill="#e8edf4" />
              <text x="2" y="21" fontSize="20" fontWeight="700" fill="#fff" fontFamily="Liberation Sans">W</text>
            </svg>
          </TaskButton>
        </div>
        <span className="ml-auto text-[12px] text-[#dce6f0] mb-[6px]">RU</span>
        <svg className="ml-[16px]" width="9" height="5" viewBox="0 0 9 5"><path d="M4.500 0L9 5H0z" fill="#fff" /></svg>
        <svg className="ml-[11px]" width="15" height="16" viewBox="0 0 15 16">
          <path d="M1 0v16" stroke="#fff" /><path d="M2 1h7v6H2z" fill="#fff" />
          <circle cx="10.500" cy="11" r="4.500" fill="#d62b2b" /><path d="M8.500 9l4 4m0-4l-4 4" stroke="#fff" />
        </svg>
        <svg className="ml-[10px]" width="15" height="15" viewBox="0 0 15 15" fill="none" stroke="#fff">
          <rect x="4.500" y="3.500" width="10" height="8" /><path d="M7 14h6M10 11.500V14M1 0v6M3 0v6" /><rect x="0" y="3" width="4" height="3" fill="#fff" />
        </svg>
        <svg className="ml-[10px]" width="11" height="12" viewBox="0 0 11 12"><path d="M0 4h3l4-4v12L3 8H0z" fill="#e8edf3" /><path d="M9 4c1 1 1 3 0 4" stroke="#e8edf3" fill="none" /></svg>
        <div className="w-[76px] ml-[9px] flex flex-col items-center text-[11px] leading-[18px] text-[#e6edf5]">
          <span>14:25</span>
          <span>29.03.2019</span>
        </div>
        <div className="w-[12px] h-[34px] ml-[2px] mr-[2px] border border-[#6e8398] bg-[linear-gradient(180deg,#7e93a8,#1d3a5c)]" />
      </div>
    </div>
  );
}
